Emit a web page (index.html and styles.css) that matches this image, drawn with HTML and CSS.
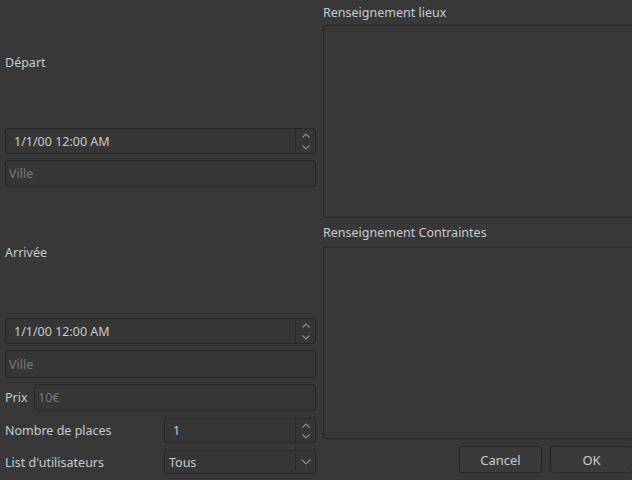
FILE: index.html
```html
<!DOCTYPE html>
<html lang="fr">
<head>
<meta charset="utf-8">
<link rel="stylesheet" href="styles.css">
</head>
<body>
<div class="dialog">
  <div class="left">
    <div class="section-label lbl1">Départ</div>
    <div class="field spin dt1">
      <span class="val dtval">1/1/00 12:00 AM</span>
      <span class="spinbtn">
        <svg width="8" height="5" viewBox="0 0 8 5"><path d="M0.5 4.5 L4 1 L7.5 4.5" fill="none" stroke="#8c8c8c" stroke-width="1.2"/></svg>
        <svg width="8" height="5" viewBox="0 0 8 5"><path d="M0.5 0.5 L4 4 L7.5 0.5" fill="none" stroke="#8c8c8c" stroke-width="1.2"/></svg>
      </span>
    </div>
    <div class="field input ville1"><span class="ph">Ville</span></div>
    <div class="section-label lbl2">Arrivée</div>
    <div class="field spin dt2">
      <span class="val dtval">1/1/00 12:00 AM</span>
      <span class="spinbtn">
        <svg width="8" height="5" viewBox="0 0 8 5"><path d="M0.5 4.5 L4 1 L7.5 4.5" fill="none" stroke="#8c8c8c" stroke-width="1.2"/></svg>
        <svg width="8" height="5" viewBox="0 0 8 5"><path d="M0.5 0.5 L4 4 L7.5 0.5" fill="none" stroke="#8c8c8c" stroke-width="1.2"/></svg>
      </span>
    </div>
    <div class="field input ville2"><span class="ph">Ville</span></div>
    <div class="row prix-row">
      <span class="lbl">Prix</span>
      <div class="field input prix"><span class="ph">10€</span></div>
    </div>
    <div class="row form-row places-row">
      <span class="lbl">Nombre de places</span>
      <div class="field spin places">
        <span class="val numval">1</span>
        <span class="spinbtn">
          <svg width="8" height="5" viewBox="0 0 8 5"><path d="M0.5 4.5 L4 1 L7.5 4.5" fill="none" stroke="#8c8c8c" stroke-width="1.2"/></svg>
          <svg width="8" height="5" viewBox="0 0 8 5"><path d="M0.5 0.5 L4 4 L7.5 0.5" fill="none" stroke="#8c8c8c" stroke-width="1.2"/></svg>
        </span>
      </div>
    </div>
    <div class="row form-row users-row">
      <span class="lbl">List d'utilisateurs</span>
      <div class="field combo">
        <span class="val comboval">Tous</span>
        <span class="combobtn">
          <svg width="10" height="6" viewBox="0 0 10 6"><path d="M0.5 0.5 L5 5 L9.5 0.5" fill="none" stroke="#8c8c8c" stroke-width="1.2"/></svg>
        </span>
      </div>
    </div>
  </div>
  <div class="right">
    <div class="group-title t1">Renseignement lieux</div>
    <div class="panel p1"></div>
    <div class="group-title t2">Renseignement Contraintes</div>
    <div class="panel p2"></div>
    <div class="buttons">
      <button class="btn">Cancel</button>
      <button class="btn">OK</button>
    </div>
  </div>
</div>
</body>
</html>
```

FILE: styles.css
```css
html, body {
  margin: 0;
  padding: 0;
  background: #383838;
  overflow: hidden;
}
body {
  font-family: "Noto Sans", "Open Sans", sans-serif;
  font-size: 12.5px;
  color: #c6ccd2;
  width: 632px;
  height: 480px;
}
.dialog {
  display: grid;
  grid-template-columns: 316px 316px;
  column-gap: 7px;
  height: 480px;
}
.left {
  display: flex;
  flex-direction: column;
  padding-left: 5px;
}
.section-label {
  display: flex;
  align-items: center;
}
.lbl1 { height: 125px; }
.lbl2 { height: 131px; }
.field {
  box-sizing: border-box;
  border: 1px solid #262626;
  border-radius: 3px;
  background: #363636;
  display: flex;
  align-items: center;
}
.dt1 { margin-top: 3px; height: 26px; }
.ville1 { margin-top: 6px; height: 27px; }
.dt2 { height: 26px; }
.ville2 { margin-top: 6px; height: 28px; }
.spin .val { flex: 1; }
.dtval { padding-left: 8px; }
.numval { padding-left: 8px; }
.spinbtn {
  width: 20px;
  align-self: stretch;
  border-left: 1px solid #2a2a2a;
  display: flex;
  flex-direction: column;
  align-items: center;
  justify-content: space-between;
  padding: 4px 0 3px;
  box-sizing: border-box;
}
.spinbtn svg { display: block; }
.ph {
  color: #777a7c;
  padding-left: 3px;
}
.row {
  display: flex;
  align-items: center;
}
.prix-row { margin-top: 6px; }
.prix-row .lbl { width: 29px; }
.prix { flex: 1; height: 27px; }
.form-row .lbl { width: 159px; }
.places-row { margin-top: 7px; }
.places { flex: 1; height: 25px; }
.users-row { margin-top: 7px; }
.combo { flex: 1; height: 24px; }
.comboval { flex: 1; padding-left: 4px; }
.combobtn {
  width: 19px;
  display: flex;
  align-items: center;
  justify-content: center;
  border-left: 1px solid #2a2a2a;
  height: 16px;
}
.combobtn svg { display: block; }
.right {
  display: flex;
  flex-direction: column;
}
.group-title {
  display: flex;
  align-items: center;
}
.t1 { height: 25px; }
.t2 { height: 29px; }
.panel {
  box-sizing: border-box;
  border: 1px solid #272727;
  background: #383838;
  margin-right: -8px;
}
.p1 { height: 193px; }
.p2 { height: 192px; }
.buttons {
  margin-top: 7px;
  display: flex;
  justify-content: flex-end;
  gap: 8px;
  margin-right: 6px;
}
.btn {
  box-sizing: border-box;
  width: 83px;
  height: 27px;
  border: 1px solid #262626;
  border-radius: 3px;
  background: #3a3a3a;
  color: #c6ccd2;
  font-family: inherit;
  font-size: 13px;
  padding: 0;
}
```
